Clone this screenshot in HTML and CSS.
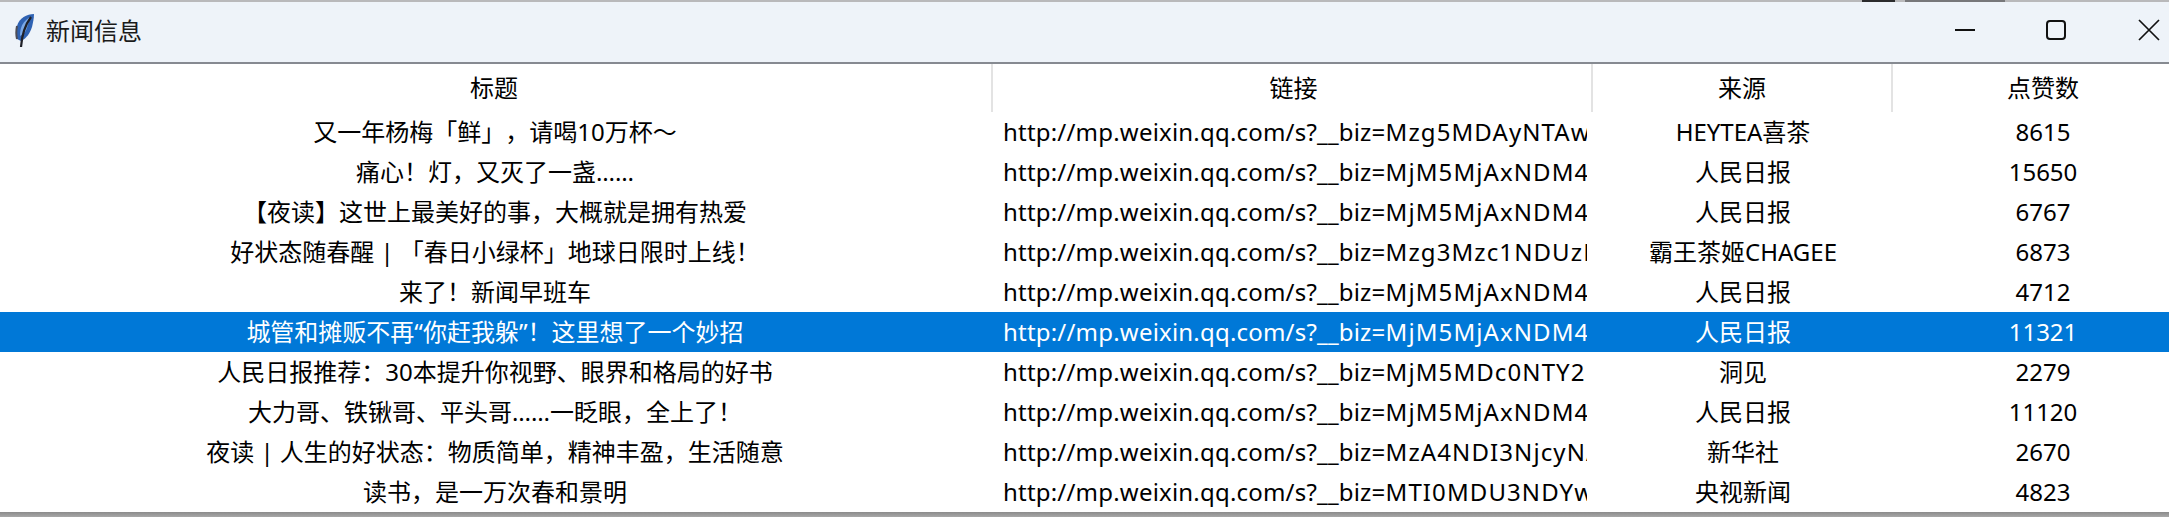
FILE: index.html
```html
<!DOCTYPE html>
<html lang="zh">
<head>
<meta charset="utf-8">
<title>新闻信息</title>
<link rel="stylesheet" href="styles.css">
</head>
<body>
<div class="window">
  <div class="topstrip"></div>
  <header class="titlebar">
    <svg class="feather" width="20" height="34" viewBox="0 0 20 34">
      <path d="M19 1C12 1 4 5 2 13c-1 5-1 9 0 13l4 2c6-3 9-8 11-14 1-4 2-9 2-13z" fill="#2f62b3"/>
      <path d="M15 4C10 7 7 11 6 15c-1 3-1 6-1 8 4-2 6-5 7-8 1-4 2-7 3-11z" fill="#7aa8e6"/>
      <path d="M16 4C10 12 7 20 6 34" fill="none" stroke="#1f2028" stroke-width="2.2"/>
      <path d="M2 13c-1 5-1 9 0 13" fill="none" stroke="#4d4d57" stroke-width="2"/>
    </svg>
    <span class="wintitle">新闻信息</span>
    <div class="controls">
      <svg width="22" height="22" viewBox="0 0 22 22" class="ctl-min"><path d="M1 11h20" stroke="#111" stroke-width="2"/></svg>
      <svg width="22" height="22" viewBox="0 0 22 22" class="ctl-max"><rect x="2" y="2" width="18" height="18" rx="3" fill="none" stroke="#111" stroke-width="2"/></svg>
      <svg width="22" height="22" viewBox="0 0 22 22" class="ctl-close"><path d="M1 1l20 20M21 1L1 21" stroke="#111" stroke-width="1.7" fill="none"/></svg>
    </div>
  </header>
  <div class="table">
    <div class="row head">
      <div class="cell sep ttl">标题</div><div class="cell sep lnk">链接</div><div class="cell sep">来源</div><div class="cell">点赞数</div>
    </div>
    <div class="row"><div class="cell ttl">又一年杨梅「鲜」，请喝10万杯～</div><div class="cell url"><span>http://mp.weixin.qq.com/s?__biz=<b>Mzg5MDAyNTAwNg==</b></span></div><div class="cell">HEYTEA喜茶</div><div class="cell">8615</div></div>
    <div class="row"><div class="cell ttl">痛心！灯，又灭了一盏……</div><div class="cell url"><span>http://mp.weixin.qq.com/s?__biz=<b>MjM5MjAxNDM4MA==</b></span></div><div class="cell">人民日报</div><div class="cell">15650</div></div>
    <div class="row"><div class="cell ttl">【夜读】这世上最美好的事，大概就是拥有热爱</div><div class="cell url"><span>http://mp.weixin.qq.com/s?__biz=<b>MjM5MjAxNDM4MA==</b></span></div><div class="cell">人民日报</div><div class="cell">6767</div></div>
    <div class="row"><div class="cell ttl">好状态随春醒 | 「春日小绿杯」地球日限时上线！</div><div class="cell url"><span>http://mp.weixin.qq.com/s?__biz=<b>Mzg3Mzc1NDUzNA==</b></span></div><div class="cell">霸王茶姬CHAGEE</div><div class="cell">6873</div></div>
    <div class="row"><div class="cell ttl">来了！新闻早班车</div><div class="cell url"><span>http://mp.weixin.qq.com/s?__biz=<b>MjM5MjAxNDM4MA==</b></span></div><div class="cell">人民日报</div><div class="cell">4712</div></div>
    <div class="row selected"><div class="cell ttl">城管和摊贩不再“你赶我躲”！这里想了一个妙招</div><div class="cell url"><span>http://mp.weixin.qq.com/s?__biz=<b>MjM5MjAxNDM4MA==</b></span></div><div class="cell">人民日报</div><div class="cell">11321</div></div>
    <div class="row"><div class="cell ttl">人民日报推荐：30本提升你视野、眼界和格局的好书</div><div class="cell url"><span>http://mp.weixin.qq.com/s?__biz=<b>MjM5MDc0NTY2MA==</b></span></div><div class="cell">洞见</div><div class="cell">2279</div></div>
    <div class="row"><div class="cell ttl">大力哥、铁锹哥、平头哥……一眨眼，全上了！</div><div class="cell url"><span>http://mp.weixin.qq.com/s?__biz=<b>MjM5MjAxNDM4MA==</b></span></div><div class="cell">人民日报</div><div class="cell">11120</div></div>
    <div class="row"><div class="cell ttl">夜读 | 人生的好状态：物质简单，精神丰盈，生活随意</div><div class="cell url"><span>http://mp.weixin.qq.com/s?__biz=<b>MzA4NDI3NjcyNA==</b></span></div><div class="cell">新华社</div><div class="cell">2670</div></div>
    <div class="row"><div class="cell ttl">读书，是一万次春和景明</div><div class="cell url"><span>http://mp.weixin.qq.com/s?__biz=<b>MTI0MDU3NDYwMQ==</b></span></div><div class="cell">央视新闻</div><div class="cell">4823</div></div>
  </div>
  <div class="bottomedge"></div>
</div>
</body>
</html>
```
FILE: styles.css
```css
* { box-sizing: border-box; }
html, body { margin: 0; padding: 0; }
body {
  width: 2169px;
  height: 517px;
  overflow: hidden;
  background: #fff;
  font-family: "Noto Sans", "Noto Sans CJK SC", sans-serif;
  color: #000;
  text-spacing-trim: space-all;
}
.window { display: flex; flex-direction: column; height: 517px; }
.topstrip {
  height: 2px;
  flex: none;
  background: linear-gradient(90deg, #b9b9bb 0, #b9b9bb 1862px, #2b2b2d 1862px, #2b2b2d 1895px, #b9b9bb 1895px, #b9b9bb 1905px, #77777a 1905px, #77777a 2005px, #b9b9bb 2005px, #b9b9bb 100%);
}
.titlebar {
  height: 62px;
  flex: none;
  display: flex;
  align-items: center;
  padding: 0 0 4px 15px;
  background: #eef3f9;
  border-bottom: 2px solid #868a91;
}
.feather { margin-right: 11px; flex: none; }
.wintitle {
  font-family: "Noto Sans CJK SC", sans-serif;
  font-size: 24px;
  line-height: 32px;
  color: #1a1a1a;
  font-weight: 400;
  margin-bottom: 1px;
}
.controls {
  margin-left: auto;
  display: flex;
  align-items: center;
  padding-right: 9px;
}
.ctl-min { margin-right: 69px; }
.ctl-max { margin-right: 71px; }
.table { flex: 1; display: flex; flex-direction: column; overflow: hidden; }
.row {
  display: grid;
  grid-template-columns: 993px 600px 300px 300px;
  height: 40px;
  flex: none;
  align-items: center;
  font-size: 24px;
  line-height: 36px;
}
.row.head { height: 48px; align-items: stretch; }
.cell {
  text-align: center;
  white-space: nowrap;
}
.ttl { padding-right: 3px; }
.lnk { padding-left: 3px; }
.head .cell { display: flex; align-items: center; justify-content: center; }
.sep { border-right: 2px solid #e3e3e3; }
.url { text-align: left; padding: 0 6px 0 10px; letter-spacing: 0.2px; overflow: hidden; }
.url span { display: block; overflow: hidden; }
.url b { font-weight: 400; letter-spacing: 1.1px; }
.selected { background: #0078d7; color: #fff; }
.bottomedge {
  height: 5px;
  flex: none;
  background: linear-gradient(#8b8b8b, #a8a8a8);
}
```
